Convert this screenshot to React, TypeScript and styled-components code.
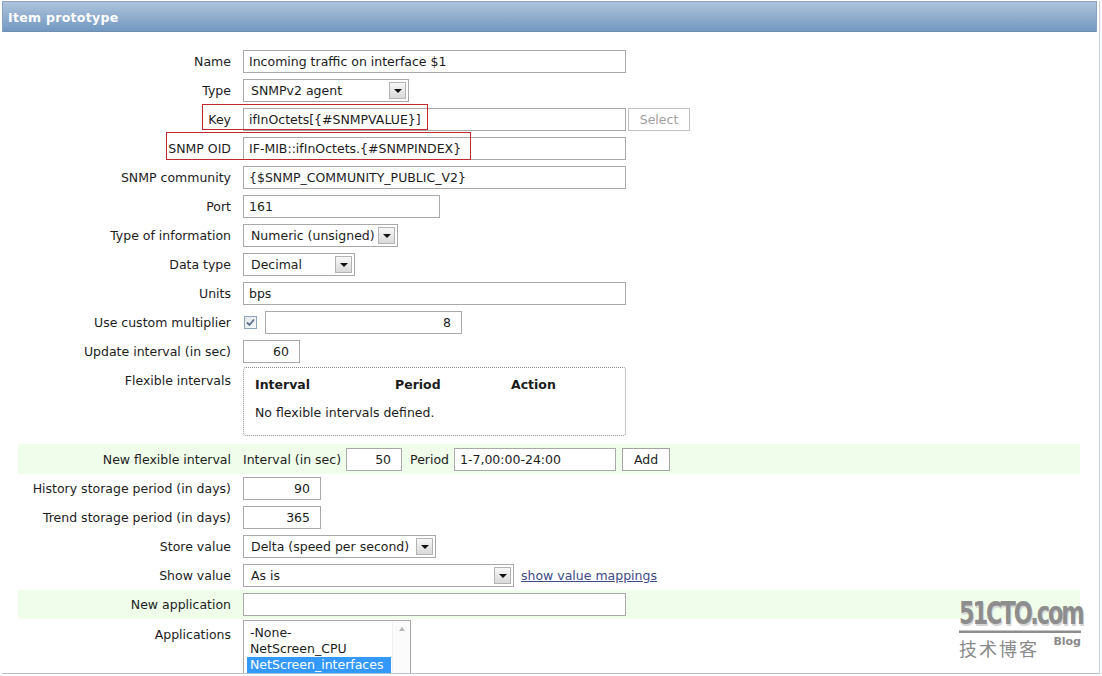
import styled, { createGlobalStyle } from 'styled-components';

const GlobalStyle = createGlobalStyle`
  html, body {
    margin: 0;
    padding: 0;
    background: #ffffff;
  }
  body {
    font-family: 'DejaVu Sans', Tahoma, sans-serif;
    font-size: 12.5px;
    color: #1c1c1c;
  }
  * {
    box-sizing: border-box;
  }
`;

const Page = styled.div`
  width: 1102px;
  height: 676px;
  overflow: hidden;
  padding: 1px 0 0 2px;
`;

const Panel = styled.div`
  position: relative;
  width: 1098px;
  height: 673px;
  border-right: 1px solid #c8d0d9;
  border-bottom: 1px solid #b1c2d4;
  overflow: hidden;
`;

const Header = styled.div`
  width: 1095px;
  height: 31px;
  display: flex;
  align-items: center;
  padding: 1px 0 0 5px;
  background: linear-gradient(#adc3dc 0%, #94b0cf 45%, #7299c2 100%);
  border: 1px solid #8aa2bd;
  border-bottom-color: #6f8fb3;
  color: #ffffff;
  font-weight: bold;
  font-size: 12.5px;
  letter-spacing: 0.3px;
`;

const Form = styled.div`
  display: flex;
  flex-direction: column;
  padding: 15px 19px 0 16px;
`;

type RowProps = {
  $tint?: boolean;
  $top?: boolean;
  $h?: number;
};

const Row = styled.div<RowProps>`
  position: relative;
  display: grid;
  grid-template-columns: 213px 1fr;
  column-gap: 12px;
  align-items: ${(p) => (p.$top ? 'start' : 'center')};
  min-height: ${(p) => p.$h ?? 29}px;
  background: ${(p) => (p.$tint ? '#effdea' : 'transparent')};
`;

const Label = styled.div<{ $pad?: number }>`
  text-align: right;
  white-space: nowrap;
  padding-top: ${(p) => p.$pad ?? 0}px;
`;

const Controls = styled.div<{ $gap?: number }>`
  display: flex;
  align-items: center;
  gap: ${(p) => p.$gap ?? 4}px;
  white-space: nowrap;
`;

const TextInput = styled.input<{ $w: number; $right?: boolean }>`
  width: ${(p) => p.$w}px;
  height: 23px;
  padding: 0 ${(p) => (p.$right ? 10 : 5)}px 0 5px;
  border: 1px solid #a9a9a9;
  background: #ffffff;
  font-family: 'DejaVu Sans', Tahoma, sans-serif;
  font-size: 12.5px;
  color: #1c1c1c;
  text-align: ${(p) => (p.$right ? 'right' : 'left')};
  outline: none;
`;

const SelectBox = styled.div<{ $w: number }>`
  width: ${(p) => p.$w}px;
  height: 23px;
  display: flex;
  align-items: center;
  justify-content: space-between;
  padding: 0 2px 0 7px;
  border: 1px solid #a9a9a9;
  background: #ffffff;
`;

const DropButton = styled.span`
  width: 17px;
  height: 17px;
  flex-shrink: 0;
  display: flex;
  align-items: center;
  justify-content: center;
  border: 1px solid #b4b4b4;
  background: linear-gradient(#f7f7f7, #d9d9d9);

  &::after {
    content: '';
    border-left: 4px solid transparent;
    border-right: 4px solid transparent;
    border-top: 4px solid #111111;
  }
`;

const PlainButton = styled.button<{ $w: number; $disabled?: boolean }>`
  width: ${(p) => p.$w}px;
  height: 23px;
  padding: 0;
  border: 1px solid ${(p) => (p.$disabled ? '#c2c2c2' : '#a3a3a3')};
  background: #ffffff;
  font-family: 'DejaVu Sans', Tahoma, sans-serif;
  font-size: 12.5px;
  color: ${(p) => (p.$disabled ? '#a0a0a0' : '#1c1c1c')};
`;

const CheckBox = styled.span`
  width: 13px;
  height: 13px;
  margin-left: 1px;
  margin-right: 4px;
  display: flex;
  align-items: center;
  justify-content: center;
  border: 1px solid #8ea3bd;
  background: linear-gradient(135deg, #e3e6ea, #fafafa);
`;

const Marker = styled.div<{ $left: number; $top: number; $w: number; $h: number }>`
  position: absolute;
  left: ${(p) => p.$left}px;
  top: ${(p) => p.$top}px;
  width: ${(p) => p.$w}px;
  height: ${(p) => p.$h}px;
  border: 1.5px solid #c0272d;
  pointer-events: none;
`;

const IntervalsBox = styled.div`
  width: 383px;
  height: 69px;
  margin-top: 1px;
  padding: 9px 11px 0 11px;
  border: 1px dotted #8c8c8c;
  border-radius: 3px;
`;

const IntervalsHead = styled.div`
  display: grid;
  grid-template-columns: 140px 116px auto;
  font-weight: bold;
  height: 17px;
`;

const IntervalsEmpty = styled.div`
  margin-top: 11px;
`;

const Link = styled.a`
  margin-left: 3px;
  color: #3c4a86;
  text-decoration: underline;
`;

const ListBox = styled.div`
  display: flex;
  width: 168px;
  height: 80px;
  margin-top: 1px;
  border: 1px solid #a9a9a9;
  background: #ffffff;
`;

const ListItems = styled.div`
  flex: 1;
  padding: 4px 0 0 3px;
`;

const ListItem = styled.div<{ $selected?: boolean }>`
  height: 16px;
  line-height: 16px;
  padding-left: 3px;
  width: 144px;
  white-space: nowrap;
  background: ${(p) => (p.$selected ? '#3399ff' : 'transparent')};
  color: ${(p) => (p.$selected ? '#ffffff' : '#1c1c1c')};
`;

const ScrollTrack = styled.div`
  width: 18px;
  display: flex;
  justify-content: center;
  padding-top: 6px;
  background: #fbfbfb;
  border-left: 1px solid #f0f0f0;

  &::before {
    content: '';
    width: 0;
    height: 0;
    border-left: 3px solid transparent;
    border-right: 3px solid transparent;
    border-bottom: 4px solid #b5b5b5;
  }
`;

const Watermark = styled.div`
  position: absolute;
  right: 18px;
  bottom: 15px;
  width: 122px;
  display: flex;
  flex-direction: column;
  color: #8a8a8a;
`;

const WatermarkLogo = styled.div`
  font-family: 'DejaVu Sans Condensed', 'DejaVu Sans', sans-serif;
  font-weight: bold;
  font-size: 25px;
  line-height: 24px;
  letter-spacing: -2.1px;
  color: #8d8d8d;
  text-shadow: 1px 1px 0 #d6d6d6;
  transform: scaleY(1.25);
  transform-origin: bottom left;
  border-bottom: 2px solid #8d8d8d;
  padding-bottom: 1px;
`;

const WatermarkSub = styled.div`
  display: flex;
  justify-content: space-between;
  align-items: flex-start;
  margin-top: 5px;
`;

const WatermarkCn = styled.span`
  font-family: 'Noto Sans CJK SC', sans-serif;
  font-size: 18px;
  line-height: 20px;
  color: #8a8a8a;
  letter-spacing: 2px;
`;

const WatermarkBlog = styled.span`
  font-family: 'DejaVu Sans', sans-serif;
  font-weight: bold;
  font-size: 11px;
  color: #8a8a8a;
  margin-top: -3px;
`;

const Select = ({ w, value }: { w: number; value: string }) => (
  <SelectBox $w={w}>
    <span>{value}</span>
    <DropButton />
  </SelectBox>
);

const App = () => {
  return (
    <Page>
      <GlobalStyle />
      <Panel>
        <Header>Item prototype</Header>
        <Form>
          <Row>
            <Label>Name</Label>
            <Controls>
              <TextInput $w={383} readOnly value='Incoming traffic on interface $1' />
            </Controls>
          </Row>
          <Row>
            <Label>Type</Label>
            <Controls>
              <Select w={166} value='SNMPv2 agent' />
            </Controls>
          </Row>
          <Row>
            <Label>Key</Label>
            <Controls $gap={2}>
              <TextInput $w={383} readOnly value='ifInOctets[{#SNMPVALUE}]' />
              <PlainButton $w={62} $disabled>
                Select
              </PlainButton>
            </Controls>
            <Marker $left={184} $top={-1} $w={226} $h={26} />
          </Row>
          <Row>
            <Label>SNMP OID</Label>
            <Controls>
              <TextInput $w={383} readOnly value='IF-MIB::ifInOctets.{#SNMPINDEX}' />
            </Controls>
            <Marker $left={148} $top={-2} $w={305} $h={28} />
          </Row>
          <Row>
            <Label>SNMP community</Label>
            <Controls>
              <TextInput $w={383} readOnly value='{$SNMP_COMMUNITY_PUBLIC_V2}' />
            </Controls>
          </Row>
          <Row>
            <Label>Port</Label>
            <Controls>
              <TextInput $w={197} readOnly value='161' />
            </Controls>
          </Row>
          <Row>
            <Label>Type of information</Label>
            <Controls>
              <Select w={155} value='Numeric (unsigned)' />
            </Controls>
          </Row>
          <Row>
            <Label>Data type</Label>
            <Controls>
              <Select w={112} value='Decimal' />
            </Controls>
          </Row>
          <Row>
            <Label>Units</Label>
            <Controls>
              <TextInput $w={383} readOnly value='bps' />
            </Controls>
          </Row>
          <Row>
            <Label>Use custom multiplier</Label>
            <Controls $gap={4}>
              <CheckBox>
                <svg width='9' height='9' viewBox='0 0 9 9'>
                  <path d='M1 4.5 L3.5 7 L8 1.5' fill='none' stroke='#5a6f8f' strokeWidth='1.8' />
                </svg>
              </CheckBox>
              <TextInput $w={197} $right readOnly value='8' />
            </Controls>
          </Row>
          <Row>
            <Label>Update interval (in sec)</Label>
            <Controls>
              <TextInput $w={57} $right readOnly value='60' />
            </Controls>
          </Row>
          <Row $top $h={78}>
            <Label $pad={7}>Flexible intervals</Label>
            <IntervalsBox>
              <IntervalsHead>
                <span>Interval</span>
                <span>Period</span>
                <span>Action</span>
              </IntervalsHead>
              <IntervalsEmpty>No flexible intervals defined.</IntervalsEmpty>
            </IntervalsBox>
          </Row>
          <Row $tint $h={30}>
            <Label>New flexible interval</Label>
            <Controls $gap={5}>
              <span>Interval (in sec)</span>
              <TextInput $w={56} $right readOnly value='50' />
              <span style={{ marginLeft: 3 }}>Period</span>
              <TextInput $w={162} readOnly value='1-7,00:00-24:00' />
              <PlainButton $w={48} style={{ marginLeft: 1 }}>
                Add
              </PlainButton>
            </Controls>
          </Row>
          <Row>
            <Label>History storage period (in days)</Label>
            <Controls>
              <TextInput $w={78} $right readOnly value='90' />
            </Controls>
          </Row>
          <Row>
            <Label>Trend storage period (in days)</Label>
            <Controls>
              <TextInput $w={78} $right readOnly value='365' />
            </Controls>
          </Row>
          <Row>
            <Label>Store value</Label>
            <Controls>
              <Select w={193} value='Delta (speed per second)' />
            </Controls>
          </Row>
          <Row>
            <Label>Show value</Label>
            <Controls>
              <Select w={271} value='As is' />
              <Link href='#'>show value mappings</Link>
            </Controls>
          </Row>
          <Row $tint>
            <Label>New application</Label>
            <Controls>
              <TextInput $w={383} readOnly value='' />
            </Controls>
          </Row>
          <Row $top>
            <Label $pad={8}>Applications</Label>
            <ListBox>
              <ListItems>
                <ListItem>-None-</ListItem>
                <ListItem>NetScreen_CPU</ListItem>
                <ListItem $selected>NetScreen_interfaces</ListItem>
              </ListItems>
              <ScrollTrack />
            </ListBox>
          </Row>
        </Form>
        <Watermark>
          <WatermarkLogo>51CTO.com</WatermarkLogo>
          <WatermarkSub>
            <WatermarkCn>技术博客</WatermarkCn>
            <WatermarkBlog>Blog</WatermarkBlog>
          </WatermarkSub>
        </Watermark>
      </Panel>
    </Page>
  );
};

export default App;
